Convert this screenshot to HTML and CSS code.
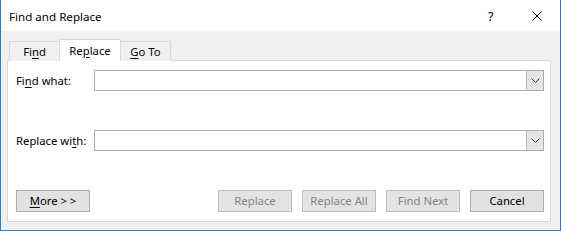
FILE: index.html
```html
<!DOCTYPE html>
<html>
<head>
<meta charset="utf-8">
<link rel="stylesheet" href="styles.css">
</head>
<body>
<div class="window">
  <div class="titlebar">
    <span class="title">Find and Replace</span>
    <span class="help">?</span>
    <span class="close"><svg width="10" height="10" viewBox="0 0 10 10"><path d="M0.5 0.5 L9.5 9.5 M9.5 0.5 L0.5 9.5" stroke="#000" stroke-width="1" fill="none"/></svg></span>
  </div>
  <div class="client">
    <div class="tabs">
      <div class="tab">Fi<u>n</u>d</div>
      <div class="tab active">Re<u>p</u>lace</div>
      <div class="tab"><u>G</u>o To</div>
    </div>
    <div class="panel">
      <div class="row">
        <label class="label">Fi<u>n</u>d what:</label>
        <div class="combo"><div class="combo-field"></div><div class="combo-btn"><svg width="9" height="5" viewBox="0 0 9 5"><path d="M0.5 0.5 L4.5 4.5 L8.5 0.5" stroke="#333" stroke-width="1" fill="none"/></svg></div></div>
      </div>
      <div class="row row2">
        <label class="label">Replace wi<u>t</u>h:</label>
        <div class="combo"><div class="combo-field"></div><div class="combo-btn"><svg width="9" height="5" viewBox="0 0 9 5"><path d="M0.5 0.5 L4.5 4.5 L8.5 0.5" stroke="#333" stroke-width="1" fill="none"/></svg></div></div>
      </div>
      <div class="buttons">
        <button class="btn"><u>M</u>ore &gt; &gt;</button>
        <div class="spacer"></div>
        <button class="btn disabled">Replace</button>
        <button class="btn disabled">Replace All</button>
        <button class="btn disabled">Find Next</button>
        <button class="btn">Cancel</button>
      </div>
    </div>
  </div>
</div>
</body>
</html>
```
FILE: styles.css
```css
html, body {
  margin: 0;
  padding: 0;
  background: #ffffff;
}
body {
  font-family: "Noto Sans", "Open Sans", sans-serif;
  font-size: 11.3px;
  color: #000;
}
u {
  text-decoration: underline;
  text-underline-offset: 2px;
}
.window {
  width: 559px;
  height: 230px;
  border-left: 1px solid #2b79d0;
  border-right: 1px solid #2b79d0;
  border-bottom: 1px solid #2b79d0;
  display: flex;
  flex-direction: column;
}
.titlebar {
  height: 31px;
  background: #fff;
  display: flex;
  align-items: center;
  padding-left: 8px;
  flex-shrink: 0;
}
.title {
  flex: 1;
  font-size: 11.6px;
  margin-top: 1px;
}
.help {
  width: 10px;
  margin-right: 34px;
  font-size: 12.5px;
  margin-top: 2px;
}
.close {
  width: 10px;
  height: 10px;
  margin-right: 18px;
  display: flex;
}
.client {
  flex: 1;
  background: #f0f0f0;
  padding: 8px 0 0 6px;
}
.tabs {
  display: flex;
  align-items: flex-end;
  margin-left: 2px;
  margin-bottom: -1px;
  height: 22px;
  position: relative;
  z-index: 1;
}
.tab {
  box-sizing: border-box;
  width: 51px;
  height: 20px;
  border: 1px solid #d9d9d9;
  border-bottom: none;
  background: #f0f0f0;
  text-align: center;
  line-height: 20px;
  margin-right: -1px;
}
.tab.active {
  width: 62px;
  height: 22px;
  background: #fff;
  line-height: 21px;
  position: relative;
}
.panel {
  box-sizing: border-box;
  width: 544px;
  height: 162px;
  border: 1px solid #d9d9d9;
  background: #fff;
  padding: 9px 6px 9px 8px;
  display: flex;
  flex-direction: column;
}
.row {
  display: flex;
  align-items: center;
  height: 21px;
}
.row2 {
  margin-top: 39px;
}
.label {
  width: 78px;
  flex-shrink: 0;
}
.combo {
  flex: 1;
  box-sizing: border-box;
  height: 21px;
  border: 1px solid #abadb3;
  display: flex;
  background: #fff;
}
.combo-field {
  flex: 1;
}
.combo-btn {
  box-sizing: border-box;
  width: 17px;
  height: 19px;
  background: #e5e5e5;
  border-left: 1px solid #b9b9b9;
  display: flex;
  align-items: center;
  justify-content: center;
}
.buttons {
  display: flex;
  gap: 10px;
  margin-top: 39px;
  height: 22px;
}
.spacer {
  flex: 1;
}
.btn {
  box-sizing: border-box;
  width: 74px;
  height: 22px;
  background: #e1e1e1;
  border: 1px solid #adadad;
  font-family: inherit;
  font-size: 11.3px;
  color: #000;
  padding: 0 0 1px 0;
  margin: 0;
}
.btn.disabled {
  color: #838383;
  border-color: #bfbfbf;
  background: #e3e3e3;
}
```
